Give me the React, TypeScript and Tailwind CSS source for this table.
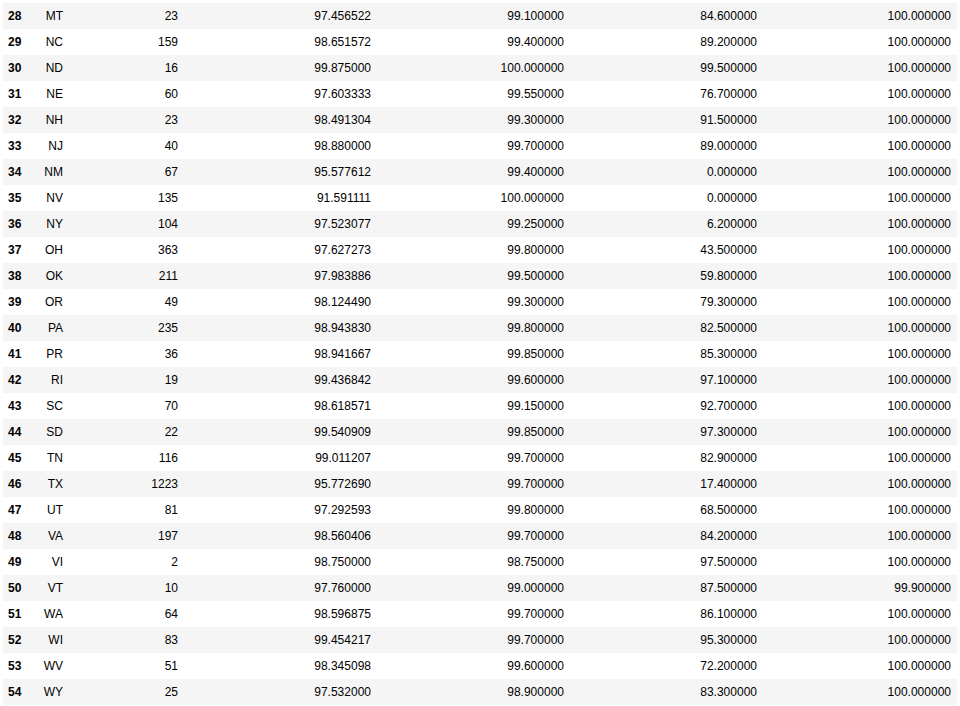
const rows: [number, string, string, string, string, string, string][] = [
  [28, "MT", "23", "97.456522", "99.100000", "84.600000", "100.000000"],
  [29, "NC", "159", "98.651572", "99.400000", "89.200000", "100.000000"],
  [30, "ND", "16", "99.875000", "100.000000", "99.500000", "100.000000"],
  [31, "NE", "60", "97.603333", "99.550000", "76.700000", "100.000000"],
  [32, "NH", "23", "98.491304", "99.300000", "91.500000", "100.000000"],
  [33, "NJ", "40", "98.880000", "99.700000", "89.000000", "100.000000"],
  [34, "NM", "67", "95.577612", "99.400000", "0.000000", "100.000000"],
  [35, "NV", "135", "91.591111", "100.000000", "0.000000", "100.000000"],
  [36, "NY", "104", "97.523077", "99.250000", "6.200000", "100.000000"],
  [37, "OH", "363", "97.627273", "99.800000", "43.500000", "100.000000"],
  [38, "OK", "211", "97.983886", "99.500000", "59.800000", "100.000000"],
  [39, "OR", "49", "98.124490", "99.300000", "79.300000", "100.000000"],
  [40, "PA", "235", "98.943830", "99.800000", "82.500000", "100.000000"],
  [41, "PR", "36", "98.941667", "99.850000", "85.300000", "100.000000"],
  [42, "RI", "19", "99.436842", "99.600000", "97.100000", "100.000000"],
  [43, "SC", "70", "98.618571", "99.150000", "92.700000", "100.000000"],
  [44, "SD", "22", "99.540909", "99.850000", "97.300000", "100.000000"],
  [45, "TN", "116", "99.011207", "99.700000", "82.900000", "100.000000"],
  [46, "TX", "1223", "95.772690", "99.700000", "17.400000", "100.000000"],
  [47, "UT", "81", "97.292593", "99.800000", "68.500000", "100.000000"],
  [48, "VA", "197", "98.560406", "99.700000", "84.200000", "100.000000"],
  [49, "VI", "2", "98.750000", "98.750000", "97.500000", "100.000000"],
  [50, "VT", "10", "97.760000", "99.000000", "87.500000", "99.900000"],
  [51, "WA", "64", "98.596875", "99.700000", "86.100000", "100.000000"],
  [52, "WI", "83", "99.454217", "99.700000", "95.300000", "100.000000"],
  [53, "WV", "51", "98.345098", "99.600000", "72.200000", "100.000000"],
  [54, "WY", "25", "97.532000", "98.900000", "83.300000", "100.000000"],
];

export default function App() {
  return (
    <div
      className="bg-white w-[960px] h-[706px] pt-[3px] pl-[3px] text-[12px] text-black"
      style={{ fontFamily: '"Liberation Sans", Arial, sans-serif' }}
    >
      <div className="flex flex-col w-[954px]">
        {rows.map((r, i) => (
          <div
            key={r[0]}
            className={`grid grid-cols-[30px_36px_115px_193px_193px_193px_194px] h-[26px] items-center ${
              i % 2 === 0 ? "bg-[#f5f5f5]" : "bg-white"
            }`}
          >
            <div className="pl-[5px] font-bold">{r[0]}</div>
            <div className="text-right pr-[6px]">{r[1]}</div>
            <div className="text-right pr-[6px]">{r[2]}</div>
            <div className="text-right pr-[6px]">{r[3]}</div>
            <div className="text-right pr-[6px]">{r[4]}</div>
            <div className="text-right pr-[6px]">{r[5]}</div>
            <div className="text-right pr-[6px]">{r[6]}</div>
          </div>
        ))}
      </div>
    </div>
  );
}
